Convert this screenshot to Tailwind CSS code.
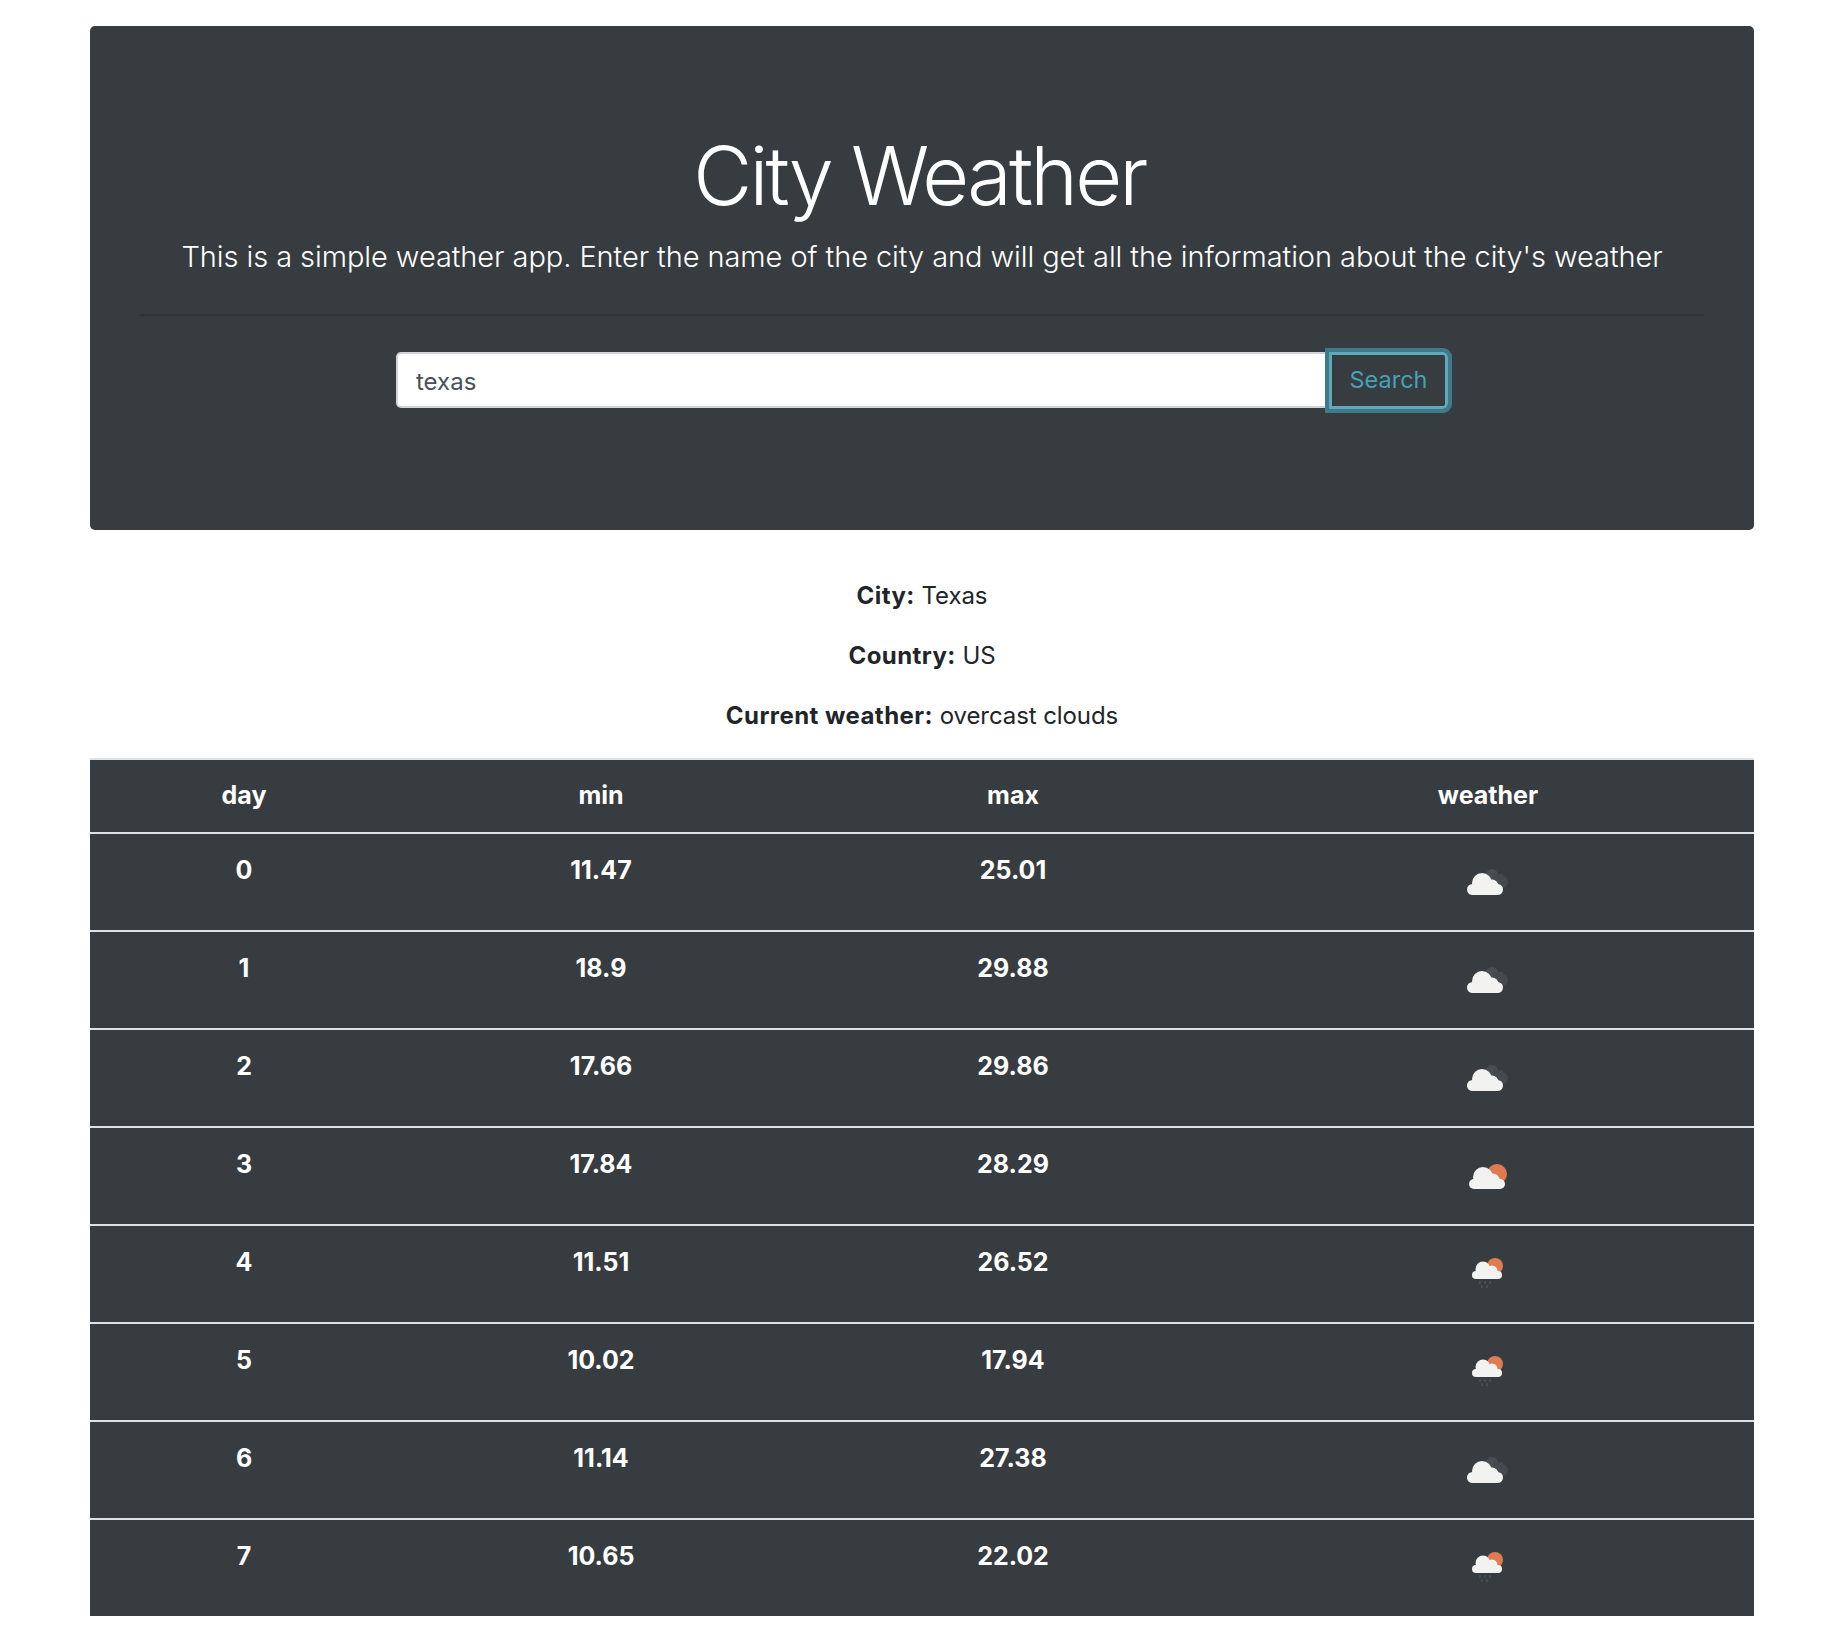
<!doctype html>
<html>
<head>
  <meta charset="utf-8"/>
  <meta name="viewport" content="width=device-width,initial-scale=1.0"/>
  <title>City Weather</title>
  <script src="https://cdn.jsdelivr.net/npm/@tailwindcss/browser@4"></script>
</head>
<body class="bg-white font-['Inter',sans-serif] text-[#212529]">
  <svg class="hidden">
    <symbol id="cloud-dark" viewBox="0 0 50 50">
      <circle cx="29" cy="25" r="6" fill="#4a4e52"/>
      <circle cx="39" cy="32" r="6" fill="#45494d"/>
      <rect x="30" y="24" width="10" height="12" fill="#45494d"/>
      <circle cx="19" cy="33" r="10" fill="#f2f2f0"/>
      <circle cx="29" cy="36" r="6.5" fill="#f2f2f0"/>
      <rect x="4" y="34" width="36" height="11" rx="5.5" fill="#f2f2f0"/>
    </symbol>
    <symbol id="cloud-sun" viewBox="0 0 50 50">
      <circle cx="34" cy="30" r="10" fill="#e07a50"/>
      <circle cx="20" cy="33" r="10" fill="#f2f2f0"/>
      <circle cx="30" cy="36" r="6.5" fill="#f2f2f0"/>
      <rect x="6" y="35" width="36" height="10" rx="5" fill="#f2f2f0"/>
    </symbol>
    <symbol id="cloud-rain" viewBox="0 0 50 50">
      <circle cx="32" cy="24" r="8" fill="#e07a50"/>
      <circle cx="20" cy="27" r="7.5" fill="#f2f2f0"/>
      <circle cx="29" cy="29" r="5.5" fill="#f2f2f0"/>
      <rect x="9" y="29" width="30" height="8" rx="4" fill="#f2f2f0"/>
      <path d="M17 39v3M22 39v3M27 39v3M19 43v3M24 43v3" stroke="#4d5155" stroke-width="1.6"/>
    </symbol>
  </svg>

  <div class="ml-[90px] w-[1664px] pt-[26px]">
    <!-- Jumbotron -->
    <div class="bg-[#373c40] rounded-[5px] h-[504px] px-[50px] pt-[100px] text-white text-center">
      <h1 class="text-[81px] font-light leading-[100px] tracking-[-2.8px] pr-[5px]">City Weather</h1>
      <p class="text-[29px] font-light leading-[42px] tracking-[-0.07px] mt-[10px]">This is a simple weather app. Enter the name of the city and will get all the information about the city's weather</p>
      <hr class="border-t-2 border-[#2f3338] mt-[36px]"/>
      <div class="flex justify-center items-start mt-[36px]">
        <input type="text" value="texas" class="w-[934px] h-[56px] bg-white border-2 border-[#ced4da] rounded-l-[5px] px-[18px] pt-[3px] text-[24px] text-[#495057] outline-none"/>
        <button class="w-[119px] h-[57px] -ml-px pb-[2px] bg-[#373c40] border-[3px] border-[#5fa9bb] outline-[4px] outline-[#3e7a8a] rounded-r-[5px] text-[23.5px] text-[#44a2b6]">Search</button>
      </div>
    </div>

    <!-- City info -->
    <div class="text-center text-[24px] leading-[36px] tracking-[-0.08px] mt-[48px]">
      <p><b class="font-bold tracking-[0.45px]">City:</b> Texas</p>
      <p class="mt-[24px]"><b class="font-bold tracking-[0.45px]">Country:</b> US</p>
      <p class="mt-[24px]"><b class="font-bold tracking-[0.45px]">Current weather:</b> overcast clouds</p>
    </div>

    <!-- Forecast -->
    <table class="w-full table-fixed border-separate border-spacing-0 mt-[24px] bg-[#373c40] text-white text-center text-[25px] font-bold">
      <colgroup>
        <col class="w-[308px]"/><col class="w-[406px]"/><col class="w-[418px]"/><col class="w-[532px]"/>
      </colgroup>
      <thead>
        <tr class="[&_th]:h-[74px] [&_th]:border-t-2 [&_th]:border-[#dee2e6]"><th>day</th><th>min</th><th>max</th><th>weather</th></tr>
      </thead>
      <tbody class="[&_td]:border-t-2 [&_td]:border-[#dee2e6] [&_td]:align-top [&_td]:pt-[18px] [&_td]:h-[98px]">
        <tr><td>0</td><td>11.47</td><td>25.01</td><td class="!pt-0"><svg class="w-[50px] h-[50px] mx-auto mt-[16px]"><use href="#cloud-dark"/></svg></td></tr>
        <tr><td>1</td><td>18.9</td><td>29.88</td><td class="!pt-0"><svg class="w-[50px] h-[50px] mx-auto mt-[16px]"><use href="#cloud-dark"/></svg></td></tr>
        <tr><td>2</td><td>17.66</td><td>29.86</td><td class="!pt-0"><svg class="w-[50px] h-[50px] mx-auto mt-[16px]"><use href="#cloud-dark"/></svg></td></tr>
        <tr><td>3</td><td>17.84</td><td>28.29</td><td class="!pt-0"><svg class="w-[50px] h-[50px] mx-auto mt-[16px]"><use href="#cloud-sun"/></svg></td></tr>
        <tr><td>4</td><td>11.51</td><td>26.52</td><td class="!pt-0"><svg class="w-[50px] h-[50px] mx-auto mt-[16px]"><use href="#cloud-rain"/></svg></td></tr>
        <tr><td>5</td><td>10.02</td><td>17.94</td><td class="!pt-0"><svg class="w-[50px] h-[50px] mx-auto mt-[16px]"><use href="#cloud-rain"/></svg></td></tr>
        <tr><td>6</td><td>11.14</td><td>27.38</td><td class="!pt-0"><svg class="w-[50px] h-[50px] mx-auto mt-[16px]"><use href="#cloud-dark"/></svg></td></tr>
        <tr><td>7</td><td>10.65</td><td>22.02</td><td class="!pt-0"><svg class="w-[50px] h-[50px] mx-auto mt-[16px]"><use href="#cloud-rain"/></svg></td></tr>
      </tbody>
    </table>
  </div>
</body>
</html>
